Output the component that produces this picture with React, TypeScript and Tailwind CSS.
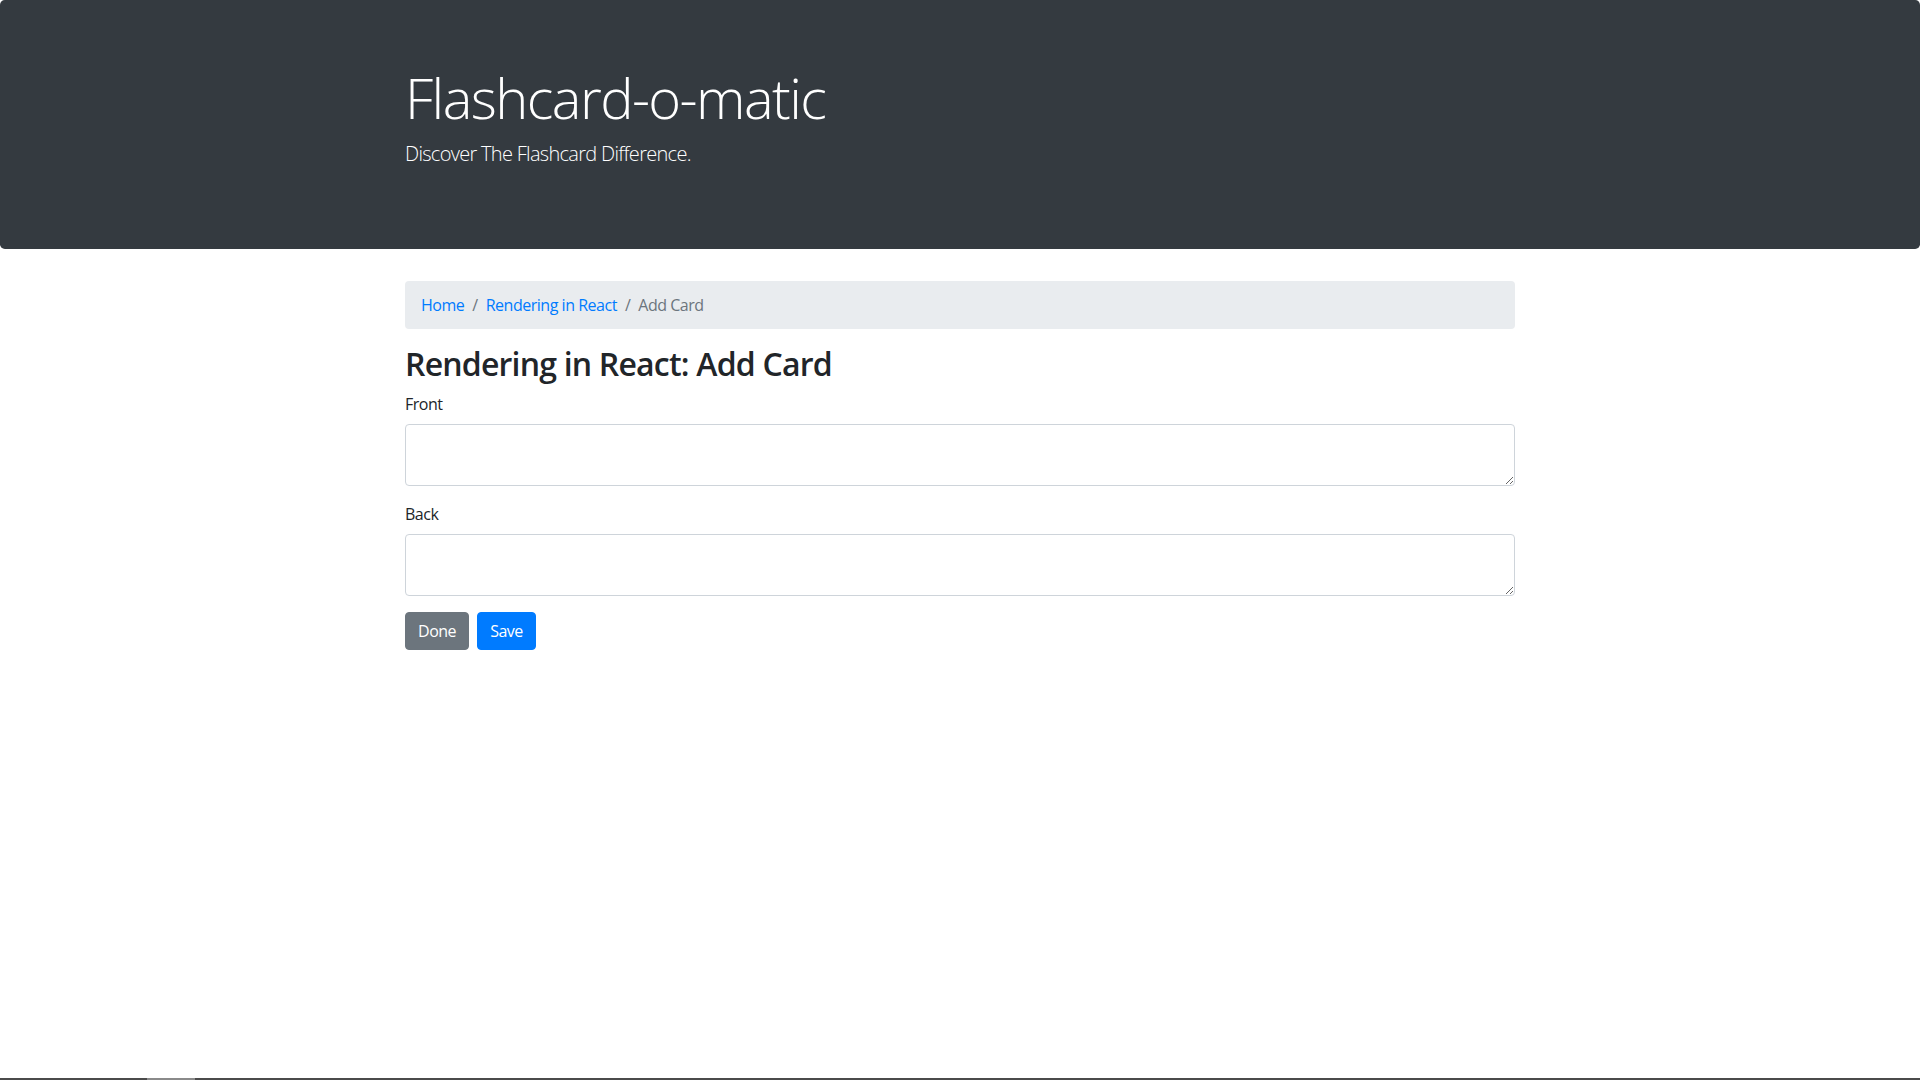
import { useState } from "react";

const crumbs = [
  { label: "Home", href: "#" },
  { label: "Rendering in React", href: "#" },
];

function Breadcrumb() {
  return (
    <nav aria-label="breadcrumb">
      <ol className="mb-4 flex flex-wrap rounded-[4px] bg-[#e9ecef] px-4 py-3 text-base leading-6">
        {crumbs.map((c, i) => (
          <li key={c.label} className={i > 0 ? "flex pl-2" : "flex"}>
            {i > 0 && <span className="pr-2 text-[#6c757d]">/</span>}
            <a href={c.href} className="text-[#007bff]">
              {c.label}
            </a>
          </li>
        ))}
        <li className="flex pl-2 text-[#6c757d]">
          <span className="pr-2">/</span>
          Add Card
        </li>
      </ol>
    </nav>
  );
}

export default function App() {
  const [front, setFront] = useState("");
  const [back, setBack] = useState("");

  return (
    <div className="flex min-h-screen flex-col bg-white font-['Open_Sans','Noto_Sans',sans-serif] text-base leading-6 tracking-[-0.03em] text-[#212529]">
      {/* Jumbotron */}
      <header className="mb-8 rounded-[0.3rem] bg-[#343a40] py-16 text-white">
        <div className="mx-auto w-[1140px] px-[15px]">
          <h1 className="mb-2 text-[56px] font-light leading-[1.2] tracking-[-0.028em]">
            Flashcard-o-matic
          </h1>
          <p className="mb-4 text-[20px] font-light leading-[1.5] tracking-[-0.035em]">
            Discover The Flashcard Difference.
          </p>
        </div>
      </header>

      <main className="mx-auto w-[1140px] px-[15px]">
        <Breadcrumb />

        <h2 className="mb-2 text-[32px] font-semibold leading-[1.2] tracking-[-0.025em]">
          Rendering in React: Add Card
        </h2>

        <form onSubmit={(e) => e.preventDefault()}>
          <div className="mb-4">
            <label htmlFor="front" className="mb-2 inline-block">
              Front
            </label>
            <textarea
              id="front"
              rows={2}
              value={front}
              onChange={(e) => setFront(e.target.value)}
              className="block w-full rounded-[4px] border border-[#ced4da] px-3 py-[6px] text-base leading-6 text-[#495057] outline-none"
            />
          </div>

          <div className="mb-4">
            <label htmlFor="back" className="mb-2 inline-block">
              Back
            </label>
            <textarea
              id="back"
              rows={2}
              value={back}
              onChange={(e) => setBack(e.target.value)}
              className="block w-full rounded-[4px] border border-[#ced4da] px-3 py-[6px] text-base leading-6 text-[#495057] outline-none"
            />
          </div>

          <div className="flex">
            <button
              type="button"
              className="mr-2 rounded-[4px] border border-[#6c757d] bg-[#6c757d] px-3 py-[6px] text-base leading-6 text-white"
            >
              Done
            </button>
            <button
              type="submit"
              className="rounded-[4px] border border-[#007bff] bg-[#007bff] px-3 py-[6px] text-base leading-6 text-white"
            >
              Save
            </button>
          </div>
        </form>
      </main>

      {/* bottom edge strip */}
      <div className="mt-auto flex h-[2px] bg-[#4b4b4b]">
        <div className="ml-[147px] w-[48px] bg-[#8a8a8a]" />
      </div>
    </div>
  );
}
